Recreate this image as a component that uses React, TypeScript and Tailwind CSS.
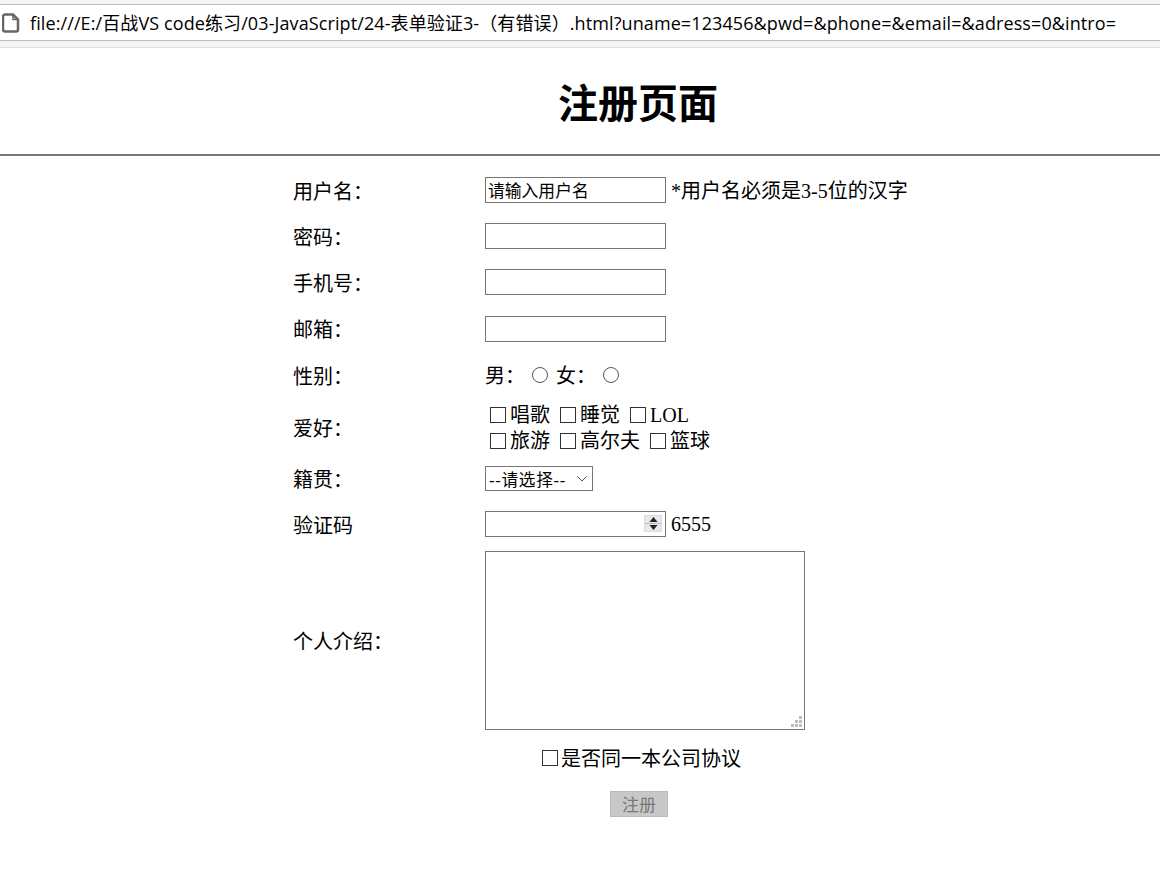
const cjk = "font-['Liberation_Serif','Noto_Sans_CJK_SC',serif]";

function Row({ label, height, children }: { label: string; height: string; children: React.ReactNode }) {
  return (
    <div className={`flex items-center ${height}`}>
      <div className="w-[192px] shrink-0 pt-[3px]">{label}</div>
      <div className="flex items-center">{children}</div>
    </div>
  );
}

function Check({ label }: { label: string }) {
  return (
    <label className="mr-[5px] flex items-center">
      <input type="checkbox" className="ml-[5px] mr-[4px] size-[16px] appearance-none border border-[#333] bg-white" />
      <span>{label}</span>
    </label>
  );
}

const field = 'h-[26px] w-[181px] border border-[#767676] bg-white pl-[2px] pt-[3px] text-[16.8px] leading-none placeholder:text-black outline-none';

export default function App() {
  return (
    <div className={`h-[871px] w-[1160px] overflow-hidden bg-white text-[20px] leading-[26px] text-black ${cjk}`}>
      <div className="h-[48px] border-b border-[#e2e2e2] bg-[#f5f5f5] pt-[4px]">
        <div className="flex h-[37px] items-center whitespace-nowrap border-y border-[#bdbdbd] bg-white pl-[2px] font-['Open_Sans','Noto_Sans_CJK_SC',sans-serif] text-[18px] tracking-[0.1px] text-black">
          <svg width="18" height="20" viewBox="0 0 18 20" fill="none" className="mr-[10px] shrink-0">
            <path d="M2.5 1.5h8.5l5 5v10a2 2 0 0 1-2 2h-11a2 2 0 0 1-2-2v-13a2 2 0 0 1 2-2z" stroke="#666" strokeWidth="2.5" />
            <path d="M11 1.5v5h5" stroke="#666" strokeWidth="1.5" />
          </svg>
          <span>file:///E:/百战VS code练习/03-JavaScript/24-表单验证3-（有错误）.html?uname=123456&amp;pwd=&amp;phone=&amp;email=&amp;adress=0&amp;intro=</span>
        </div>
      </div>

      <h1 className="flex h-[106px] items-center justify-center pl-[116px] pt-[8px] text-[40px] font-bold leading-none">注册页面</h1>
      <hr className="h-[2px] border-0 bg-[#777]" />

      <form className="pl-[293px] pt-[11px]">
        <Row label="用户名：" height="h-[46px]">
          <input className={field} placeholder="请输入用户名" />
          <span className="ml-[5px] whitespace-nowrap pt-[1px]">*用户名必须是3-5位的汉字</span>
        </Row>
        <Row label="密码：" height="h-[46px]">
          <input type="password" className={field} />
        </Row>
        <Row label="手机号：" height="h-[46px]">
          <input className={field} />
        </Row>
        <Row label="邮箱：" height="h-[47px]">
          <input className={field} />
        </Row>
        <Row label="性别：" height="h-[46px]">
          <span className="pt-[1px]">男：</span>
          <input type="radio" name="sex" className="ml-[7px] mr-[8px] size-[16px] appearance-none rounded-full border border-[#555] bg-white" />
          <span className="pt-[1px]">女：</span>
          <input type="radio" name="sex" className="ml-[7px] size-[16px] appearance-none rounded-full border border-[#555] bg-white" />
        </Row>
        <Row label="爱好：" height="h-[58px]">
          <div className="mt-[2px] flex flex-col">
            <div className="flex">
              <Check label="唱歌" />
              <Check label="睡觉" />
              <Check label="LOL" />
            </div>
            <div className="flex">
              <Check label="旅游" />
              <Check label="高尔夫" />
              <Check label="篮球" />
            </div>
          </div>
        </Row>
        <div className="pt-[2px]">
          <Row label="籍贯：" height="h-[41px]">
            <div className="relative h-[25px] w-[108px] border border-[#767676] bg-white pl-[3px] pt-[1px] text-[16.67px] leading-[25px] tracking-[0.7px]">
              <span>--请选择--</span>
              <svg width="10" height="6" viewBox="0 0 10 6" fill="none" className="absolute right-[5px] top-[9px]">
                <path d="M0.5 0.5l4.5 4.5 4.5-4.5" stroke="#555" strokeWidth="1" />
              </svg>
            </div>
          </Row>
        </div>
        <Row label="验证码" height="h-[50px]">
          <div className="relative h-[26px] w-[181px] border border-[#767676] bg-white">
            <div className="absolute right-[3px] top-[3px] flex h-[17px] w-[18px] flex-col items-center justify-between border border-[#dcdcdc] bg-[#e8e8e8] py-[1px]">
              <svg width="9" height="5" viewBox="0 0 9 5"><path d="M4.5 0l4 5h-8z" fill="#222" /></svg>
              <div className="h-px w-full bg-[#bdbdbd]" />
              <svg width="9" height="5" viewBox="0 0 9 5"><path d="M4.5 5l4-5h-8z" fill="#222" /></svg>
            </div>
          </div>
          <span className="ml-[5px]">6555</span>
        </Row>
        <Row label="个人介绍：" height="h-[183px]">
          <div className="relative">
            <textarea className="block h-[179px] w-[320px] resize-none border border-[#767676] bg-white outline-none" />
            <svg width="11" height="11" viewBox="0 0 11 11" className="absolute bottom-[3px] right-[3px]" fill="#bdbdbd">
              <rect x="8" y="0" width="3" height="3" />
              <rect x="4" y="4" width="3" height="3" />
              <rect x="8" y="4" width="3" height="3" />
              <rect x="0" y="8" width="3" height="3" />
              <rect x="4" y="8" width="3" height="3" />
              <rect x="8" y="8" width="3" height="3" />
            </svg>
          </div>
        </Row>
        <div className="flex h-[52px] items-center pl-[249px]">
          <input type="checkbox" className="mr-[3px] size-[16px] appearance-none border border-[#333] bg-white" />
          <span className="pt-[2px]">是否同一本公司协议</span>
        </div>
        <div className="flex h-[40px] items-center pl-[317px]">
          <button type="button" disabled className="h-[26px] w-[58px] border border-[#bbb] bg-[#c8c8c8] pt-[2px] text-[17px] leading-none text-[#777]">注册</button>
        </div>
      </form>
    </div>
  );
}
